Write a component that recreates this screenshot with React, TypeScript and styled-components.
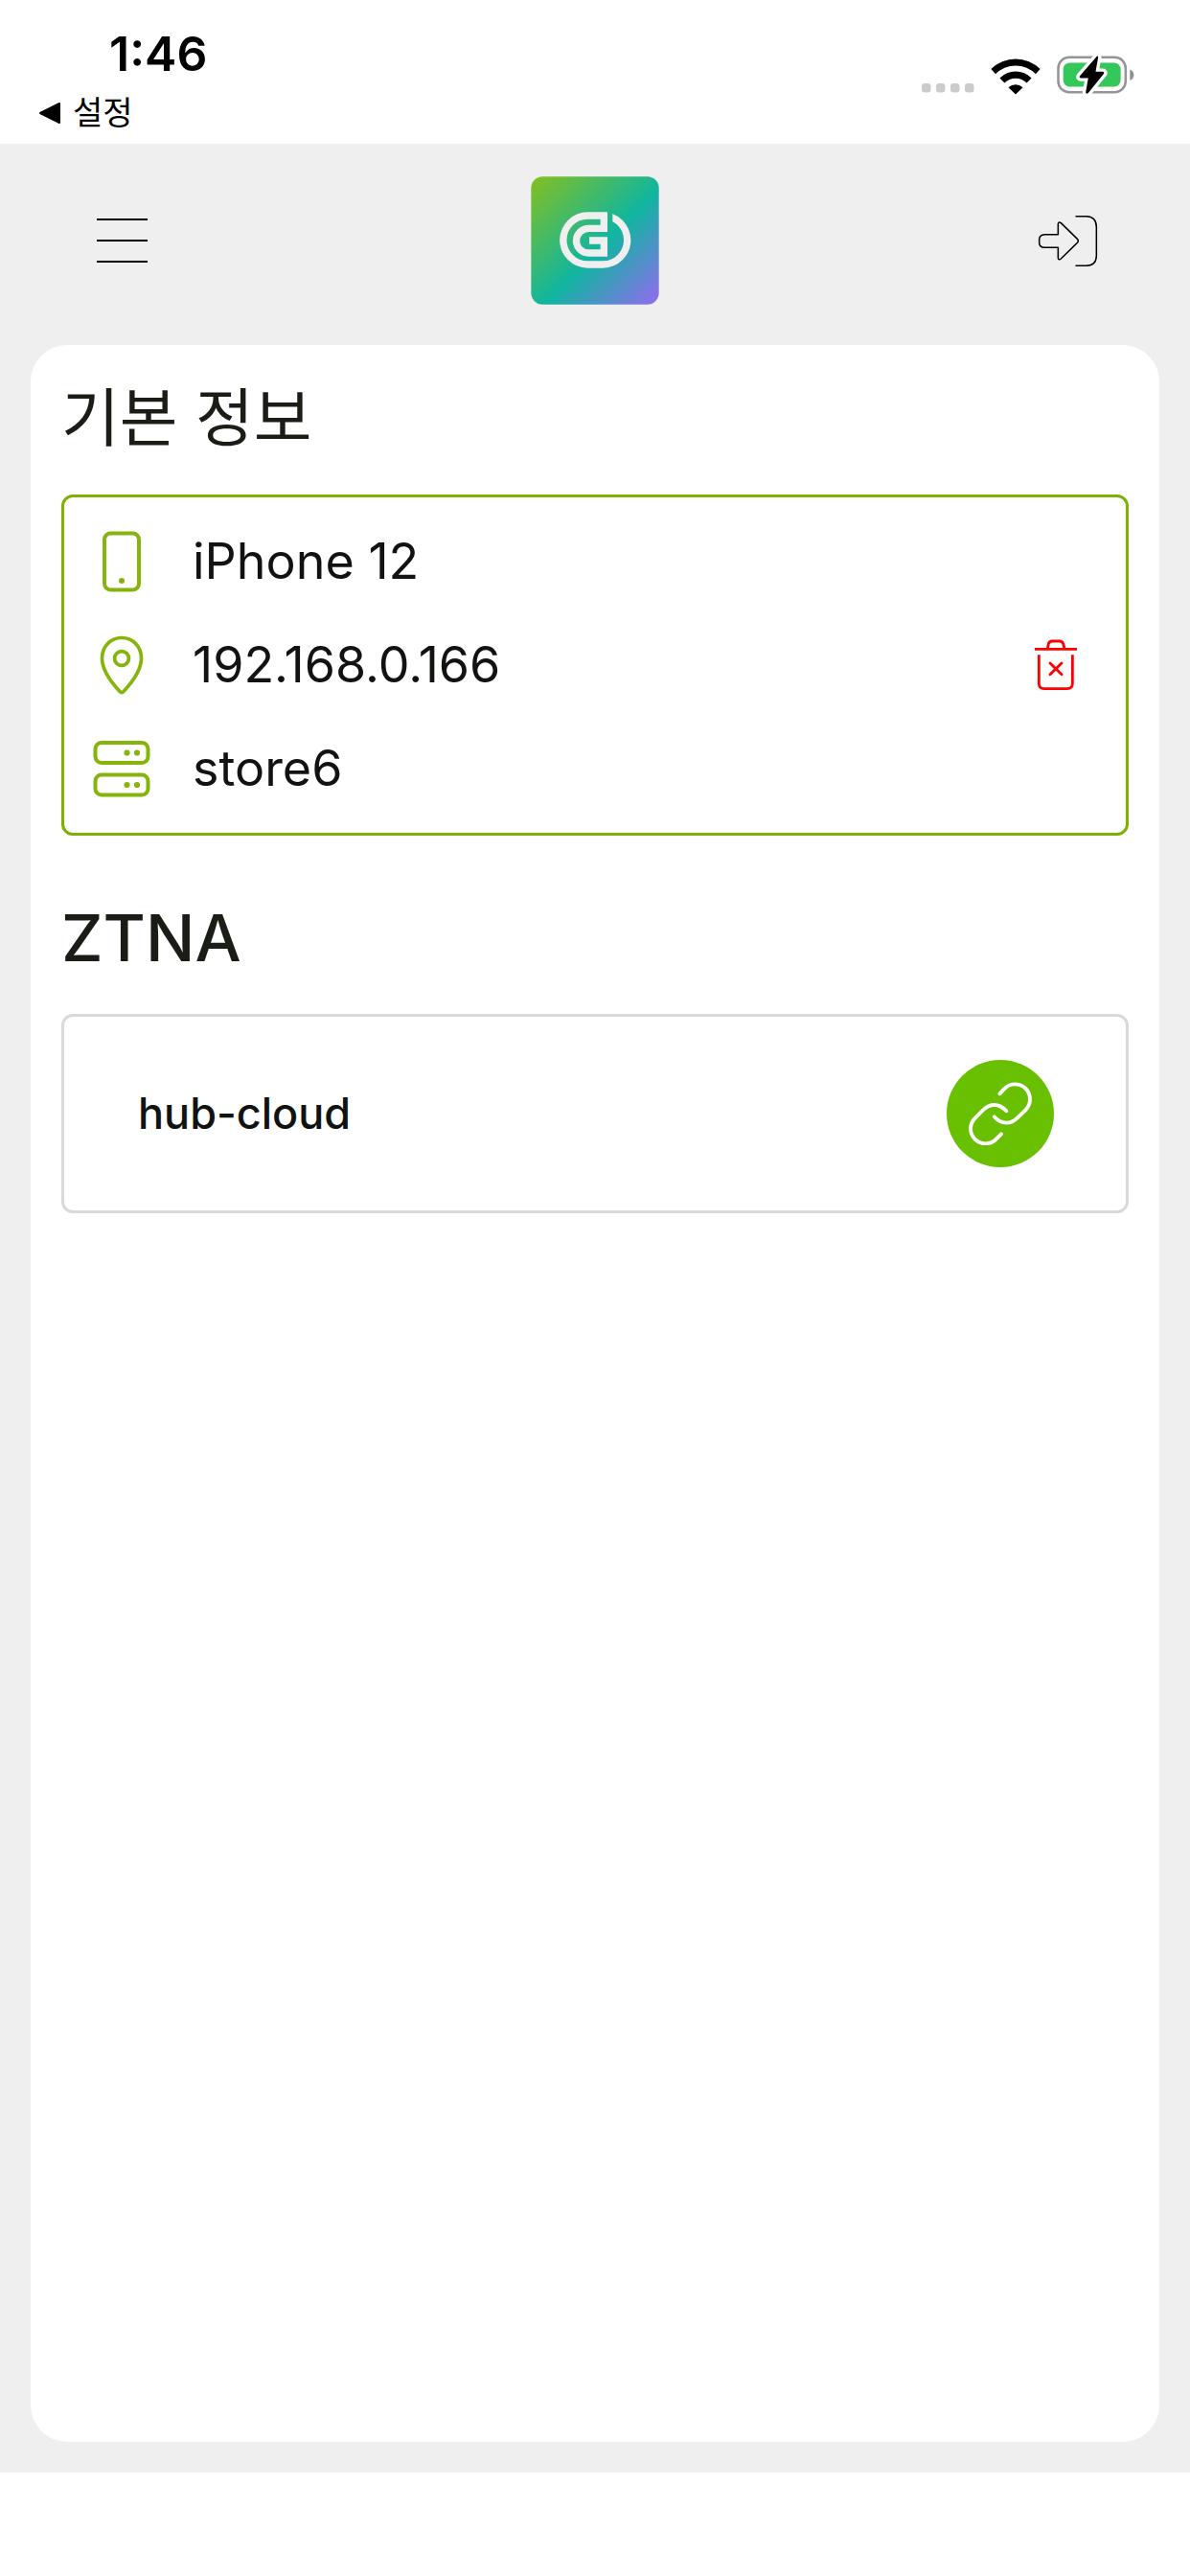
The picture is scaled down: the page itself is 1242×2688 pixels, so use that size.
import React from "react";
import styled, { createGlobalStyle } from "styled-components";

const GlobalStyle = createGlobalStyle`
  * { box-sizing: border-box; }
  body {
    margin: 0;
    background: #fff;
    color: #1a1c16;
    font-family: Inter, "Noto Sans CJK KR", sans-serif;
  }
  button {
    display: grid;
    place-items: center;
    padding: 0;
    border: 0;
    background: none;
    color: inherit;
    cursor: pointer;
  }
  svg { display: block; }
`;

const Page = styled.div`
  display: flex;
  flex-direction: column;
  min-height: 100vh;
`;

const StatusBar = styled.header`
  display: flex;
  justify-content: space-between;
  height: 150px;
  padding: 26px 58px 0 40px;
  color: #000;
`;

const StatusLeft = styled.div`
  display: flex;
  flex-direction: column;
  align-items: flex-start;
`;

const Clock = styled.time`
  padding-left: 74px;
  font-size: 50px;
  font-weight: 600;
  line-height: 60px;
`;

const BackLink = styled.a`
  display: flex;
  align-items: center;
  gap: 12px;
  color: #000;
  font-size: 34px;
  line-height: 64px;
  text-decoration: none;
`;

const StatusIcons = styled.div`
  display: flex;
  align-items: flex-end;
  gap: 17px;
  height: 73px;
`;

const Shell = styled.div`
  display: flex;
  flex: 1;
  flex-direction: column;
  padding: 0 32px 32px;
  background: #efefef;
`;

const TopBar = styled.nav`
  display: grid;
  grid-template-columns: 1fr auto 1fr;
  align-items: center;
  padding: 34px 64px 42px;
`;

const MenuButton = styled.button`
  justify-self: start;
`;

const LoginButton = styled.button`
  justify-self: end;
`;

const Panel = styled.main`
  display: flex;
  flex: 1;
  flex-direction: column;
  gap: 62px;
  padding: 32px;
  border-radius: 38px;
  background: #fff;
`;

const Section = styled.section`
  display: flex;
  flex-direction: column;
  gap: 36px;
`;

const Heading = styled.h2<{ $size: number; $weight: number }>`
  margin: 0;
  font-size: ${(p) => p.$size}px;
  font-weight: ${(p) => p.$weight};
  line-height: 88px;
`;

const Box = styled.div<{ $color: string }>`
  display: flex;
  align-items: center;
  justify-content: space-between;
  border: 3px solid ${(p) => p.$color};
  border-radius: 12px;
`;

const InfoBox = styled(Box)`
  padding: 13px 51px 13px 30px;
`;

const HubBox = styled(Box)`
  padding: 45px 75px 45px 77px;
`;

const InfoList = styled.ul`
  margin: 0;
  padding: 0;
  list-style: none;
`;

const InfoRow = styled.li`
  display: grid;
  grid-template-columns: 60px auto;
  align-items: center;
  gap: 44px;
  height: 108px;
  color: #111310;
  font-size: 52px;
  line-height: 60px;
`;

const RowIcon = styled.span`
  display: grid;
  place-items: center;
  color: #85b40c;
`;

const HubName = styled.span`
  color: #111310;
  font-size: 45px;
  font-weight: 500;
  line-height: 60px;
`;

const DeleteButton = styled.button`
  && { color: #ff0000; }
`;

const ConnectButton = styled.button`
  && {
    width: 112px;
    height: 112px;
    border-radius: 50%;
    background: #69c000;
    color: #fff;
  }
`;

const SafeArea = styled.footer`
  height: 108px;
  background: #fff;
`;

const BackIcon = () => (
  <svg width="24" height="24" viewBox="0 0 24 24" aria-hidden="true">
    <path d="M2 12 L22 2 V22 Z" fill="#000" stroke="#000" strokeWidth="2" strokeLinejoin="round" />
  </svg>
);

const SignalIcon = () => (
  <svg width="55" height="12" viewBox="0 0 55 12" aria-hidden="true">
    {[0, 15, 30, 45].map((x) => (
      <rect key={x} x={x} y="0" width="9.5" height="9.5" rx="3.2" fill="#cbcbcb" />
    ))}
  </svg>
);

const WifiIcon = () => (
  <svg width="52" height="39" viewBox="344 115 155 116" aria-hidden="true">
    <path d="M345 151 A108 108 0 0 1 498 151 L484 166 A88 88 0 0 0 359 166 Z" />
    <path d="M372 179 A70 70 0 0 1 471 179 L456 194 A49 49 0 0 0 387 194 Z" />
    <path d="M399 208 A33 33 0 0 1 444 208 L421.5 230 Z" />
  </svg>
);

const BatteryIcon = () => (
  <svg width="81" height="42" viewBox="551 113 242 125" aria-hidden="true">
    <rect x="555.5" y="121" width="210" height="109" rx="34" fill="none" stroke="#959595" strokeWidth="7.5" />
    <path d="M779 159 Q791 164 791 176 Q791 188 779 193 Z" fill="#8f8f8f" />
    <rect x="571" y="138" width="179" height="75" rx="20" fill="#34c759" />
    <path
      d="M676 118 L622 180 Q620 186 626 186 H649 L641 231 Q643 237 649 232 L698 172 Q700 166 694 166 H672 L680 121 Q680 115 676 118 Z"
      fill="#000"
      stroke="#fff"
      strokeWidth="20"
      strokeLinejoin="round"
      paintOrder="stroke"
    />
  </svg>
);

const MenuIcon = () => (
  <svg width="63" height="54" viewBox="0 0 63 54" stroke="#000" strokeWidth="1.8" aria-hidden="true">
    <path d="M5 5 H58 M5 27 H58 M5 49 H58" />
  </svg>
);

const LogoMark = () => (
  <svg width="134" height="134" viewBox="72 74 402 402" role="img" aria-label="Genian">
    <defs>
      <linearGradient id="brand" x1="0" y1="0" x2="1" y2="1">
        <stop offset="0.04" stopColor="#7cbf28" />
        <stop offset="0.55" stopColor="#10b5a1" />
        <stop offset="0.96" stopColor="#8970ea" />
      </linearGradient>
      <clipPath id="ringGap">
        <rect x="328" y="170" width="80" height="120" />
      </clipPath>
    </defs>
    <rect x="73" y="75" width="400" height="400" rx="36" fill="url(#brand)" />
    <g fill="none" stroke="#efefef" strokeWidth="22">
      <path d="M298 197 A76 76.5 0 0 1 374 273.5 V275" clipPath="url(#ringGap)" />
      <path d="M374 273.5 A76 76.5 0 0 1 298 350 H250 A76.5 76.5 0 0 1 250 197 H301 V237 H253 A38.5 38.5 0 0 0 253 314 H301 V275 H255" />
    </g>
  </svg>
);

const LoginIcon = () => (
  <svg
    width="63"
    height="55"
    viewBox="489 612 189 165"
    fill="none"
    stroke="#000"
    strokeWidth="4.6"
    strokeLinecap="round"
    strokeLinejoin="round"
    aria-hidden="true"
  >
    <path d="M609 617 H642 Q673 619 673 650 V740 Q673 770 642 772 H609" />
    <path d="M553 674 V641 Q555 633 562 638 L614 689 Q618 694 614 699 L562 750 Q555 756 553 748 V715 H511 Q494 714 494 700 V690 Q494 675 511 674 Z" />
  </svg>
);

const PhoneIcon = () => (
  <svg width="40" height="64" viewBox="0 0 40 64" fill="none" aria-hidden="true">
    <rect x="2" y="2.5" width="36" height="59" rx="6.5" stroke="currentColor" strokeWidth="4" />
    <circle cx="20" cy="52" r="3" fill="currentColor" />
  </svg>
);

const PinIcon = () => (
  <svg width="46" height="62" viewBox="0 0 46 62" fill="none" stroke="currentColor" strokeLinejoin="round" aria-hidden="true">
    <path d="M23 2.5 C11 2.5 2.5 12 2.5 24 C2.5 37 14 51 21 58.5 Q23 60.5 25 58.5 C32 51 43.5 37 43.5 24 C43.5 12 35 2.5 23 2.5 Z" strokeWidth="3.7" />
    <circle cx="23" cy="24" r="7.4" strokeWidth="3.8" />
  </svg>
);

const ServerIcon = () => (
  <svg width="60" height="60" viewBox="0 0 60 60" fill="none" aria-hidden="true">
    <g stroke="currentColor" strokeWidth="4">
      <rect x="2.5" y="3" width="55" height="21" rx="6.5" />
      <rect x="2.5" y="36.5" width="55" height="21" rx="6.5" />
    </g>
    <g fill="currentColor">
      <circle cx="35.5" cy="13.5" r="3.1" />
      <circle cx="46" cy="13.5" r="3.1" />
      <circle cx="35.5" cy="47" r="3.1" />
      <circle cx="46" cy="47" r="3.1" />
    </g>
  </svg>
);

const TrashIcon = () => (
  <svg width="44" height="54" viewBox="120 83 132 162" fill="none" stroke="currentColor" strokeWidth="8.5" aria-hidden="true">
    <path d="M120 114 H252" />
    <path d="M160 112 L163 97 Q166 89 174 89 H198 Q206 89 209 97 L213 112" />
    <path d="M133 132 V222 Q133 238 149 238 H222 Q238 238 238 222 V132" />
    <path d="M168 158 L204 193 M204 158 L168 193" strokeLinecap="round" />
  </svg>
);

const LinkIcon = () => (
  <svg width="66" height="66" viewBox="153 269 198 198" fill="none" stroke="currentColor" strokeWidth="11.5" strokeLinecap="round" aria-hidden="true">
    <path d="M250 306 L264 291 Q278 276 298 276 C325 276 345 297 345 324 Q345 342 331 357 L305 382 Q290 397 271 397 C254 397 242 388 233 378" />
    <path d="M271 360 C262 350 250 341 233 341 Q214 341 199 356 L174 381 Q159 396 159 414 C159 441 179 462 206 462 Q226 462 240 447 L255 432" />
  </svg>
);

const infoRows = [
  { icon: <PhoneIcon />, text: "iPhone 12" },
  { icon: <PinIcon />, text: "192.168.0.166" },
  { icon: <ServerIcon />, text: "store6" },
];

export default function App() {
  return (
    <Page>
      <GlobalStyle />
      <StatusBar>
        <StatusLeft>
          <Clock>1:46</Clock>
          <BackLink href="#settings">
            <BackIcon />
            설정
          </BackLink>
        </StatusLeft>
        <StatusIcons>
          <SignalIcon />
          <WifiIcon />
          <BatteryIcon />
        </StatusIcons>
      </StatusBar>
      <Shell>
        <TopBar>
          <MenuButton type="button" aria-label="메뉴">
            <MenuIcon />
          </MenuButton>
          <LogoMark />
          <LoginButton type="button" aria-label="로그인">
            <LoginIcon />
          </LoginButton>
        </TopBar>
        <Panel>
          <Section>
            <Heading $size={66} $weight={400}>기본 정보</Heading>
            <InfoBox $color="#7fb008">
              <InfoList>
                {infoRows.map((row) => (
                  <InfoRow key={row.text}>
                    <RowIcon>{row.icon}</RowIcon>
                    <span>{row.text}</span>
                  </InfoRow>
                ))}
              </InfoList>
              <DeleteButton type="button" aria-label="삭제">
                <TrashIcon />
              </DeleteButton>
            </InfoBox>
          </Section>
          <Section>
            <Heading $size={68} $weight={500}>ZTNA</Heading>
            <HubBox $color="#d9d9d9">
              <HubName>hub-cloud</HubName>
              <ConnectButton type="button" aria-label="연결">
                <LinkIcon />
              </ConnectButton>
            </HubBox>
          </Section>
        </Panel>
      </Shell>
      <SafeArea />
    </Page>
  );
}
